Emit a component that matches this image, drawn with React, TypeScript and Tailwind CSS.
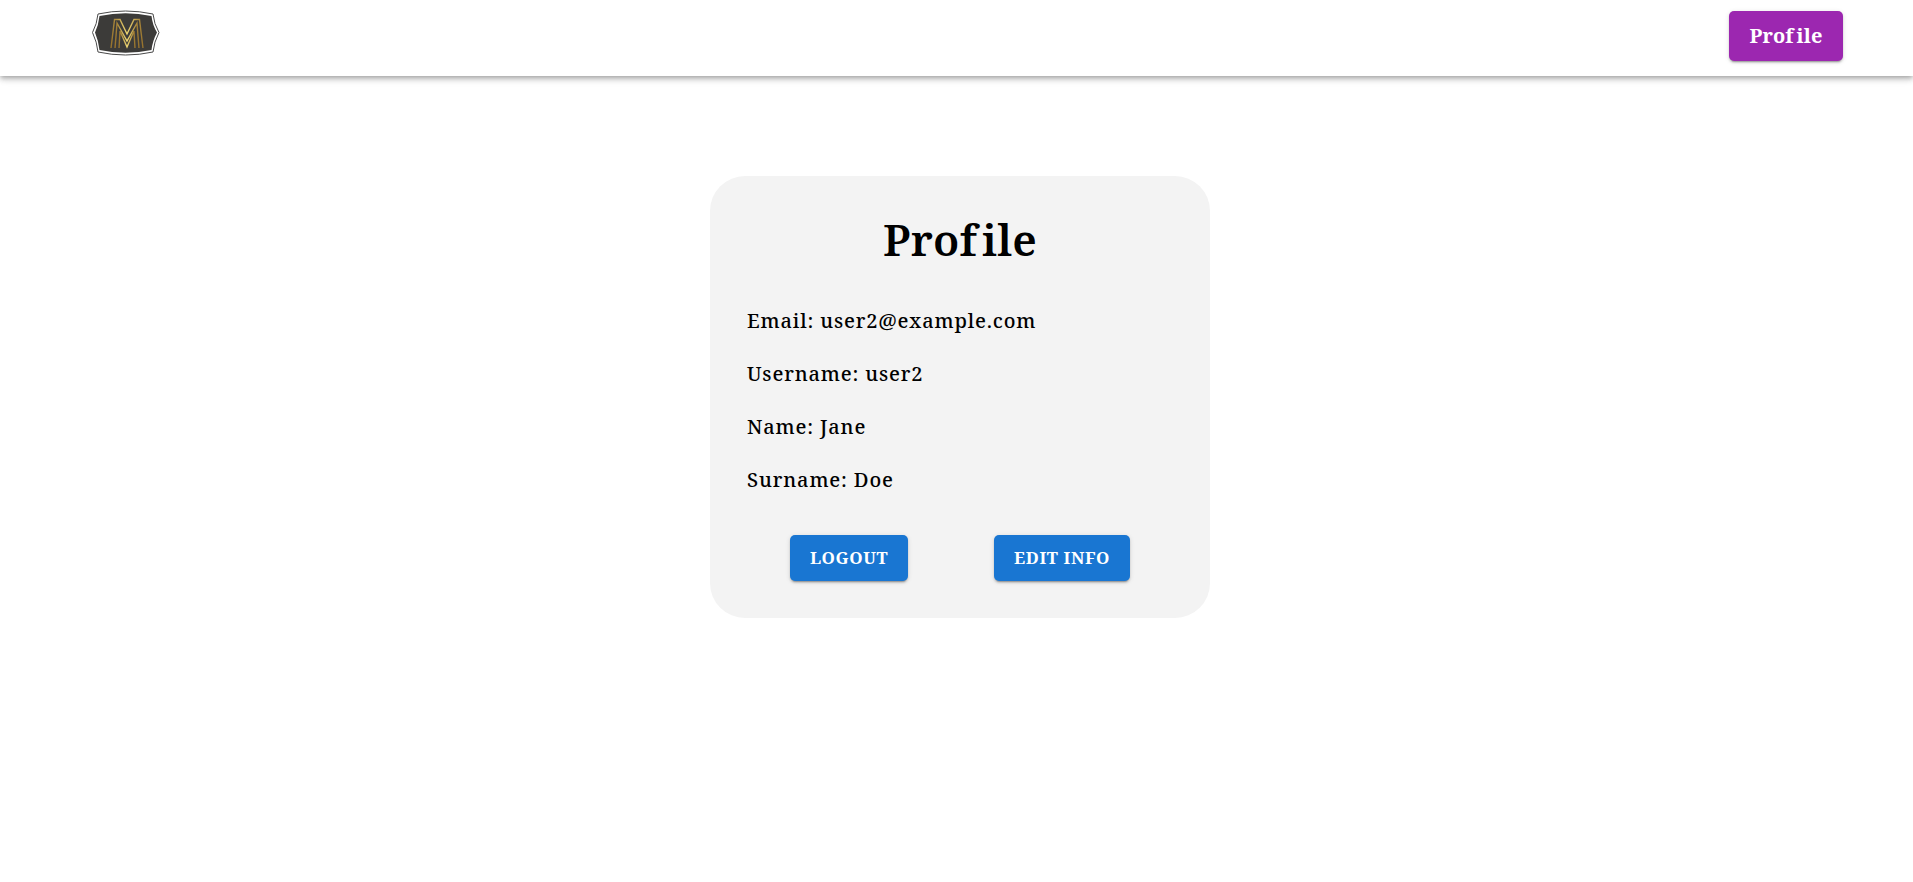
const shadow2 = "shadow-[0_3px_1px_-2px_rgba(0,0,0,0.2),0_2px_2px_0_rgba(0,0,0,0.14),0_1px_5px_0_rgba(0,0,0,0.12)]";

export default function App() {
  const serif = "font-['Noto_Serif','Droid_Serif','DejaVu_Serif',serif]";
  return (
    <div className={`min-h-[882px] bg-white text-black ${serif}`}>
      <header className="flex h-[76px] items-center justify-between bg-white pl-[92px] pr-[70px] shadow-[0_2px_4px_-1px_rgba(0,0,0,0.2),0_4px_5px_0_rgba(0,0,0,0.14),0_1px_10px_0_rgba(0,0,0,0.12)]">
        <svg width="68" height="47" viewBox="0 0 68 47" className="-mt-[10px]">
          <defs>
            <linearGradient id="gold" x1="0" y1="0" x2="1" y2="0">
              <stop offset="0" stopColor="#94702c" />
              <stop offset="0.5" stopColor="#f0d874" />
              <stop offset="1" stopColor="#94702c" />
            </linearGradient>
          </defs>
          <path d="M6 4 Q33.5 -2 61 4 Q62 14 67 22.5 Q62 32 61 42 Q33.5 48 6 42 Q5 32 0.5 22.5 Q5 14 6 4 Z" fill="#fff" stroke="#4a4a4a" strokeWidth="1" />
          <path d="M7.5 6 Q33.5 0.5 59.5 6 Q60.5 15 65 22.5 Q60.5 31 59.5 40 Q33.5 45.5 7.5 40 Q6.5 31 3 22.5 Q6.5 15 7.5 6 Z" fill="#3c3b39" />
          <g fill="none" stroke="url(#gold)" strokeWidth="1.4">
            <path d="M19 38 L22.5 9.5 L28 9.5 L35 24 L42 9.5 L47.5 9.5 L51 38" />
            <path d="M23 38 L25 13 L35 31 L45 13 L47 38" />
            <path d="M27 38 L28 21 L35 37 L42 21 L43 38" />
          </g>
        </svg>
        <button className={`mt-[-4px] h-[50px] w-[114px] rounded-[5px] bg-[#9c27b0] text-[20px] font-bold tracking-[0.1px] text-white ${shadow2}`}>
          Prof<span className="ml-[3px]">ile</span>
        </button>
      </header>
      <main className="flex justify-center pt-[100px] pl-[7px]">
        <section className="h-[442px] w-[500px] rounded-[35px] bg-[#f3f3f3] px-[37px]">
          <h1 className="pt-[33px] text-center text-[44px] leading-[60px] font-semibold tracking-[0.2px]">
            Prof<span className="ml-[5px]">ile</span>
          </h1>
          <div className="mt-[38px] flex flex-col gap-[26px] text-[20px] leading-[27px] font-medium tracking-[0.85px]">
            <p>Email: user2@example.com</p>
            <p>Username: user2</p>
            <p>Name: Jane</p>
            <p>Surname: Doe</p>
          </div>
          <div className="mt-[42px] flex justify-around">
            {["LOGOUT", "EDIT INFO"].map((t) => (
              <button
                key={t}
                className={`h-[46px] rounded-[5px] bg-[#1976d2] px-[20px] pb-[1px] text-[17px] font-bold tracking-[0.6px] text-white ${shadow2}`}
              >
                {t}
              </button>
            ))}
          </div>
        </section>
      </main>
    </div>
  );
}
